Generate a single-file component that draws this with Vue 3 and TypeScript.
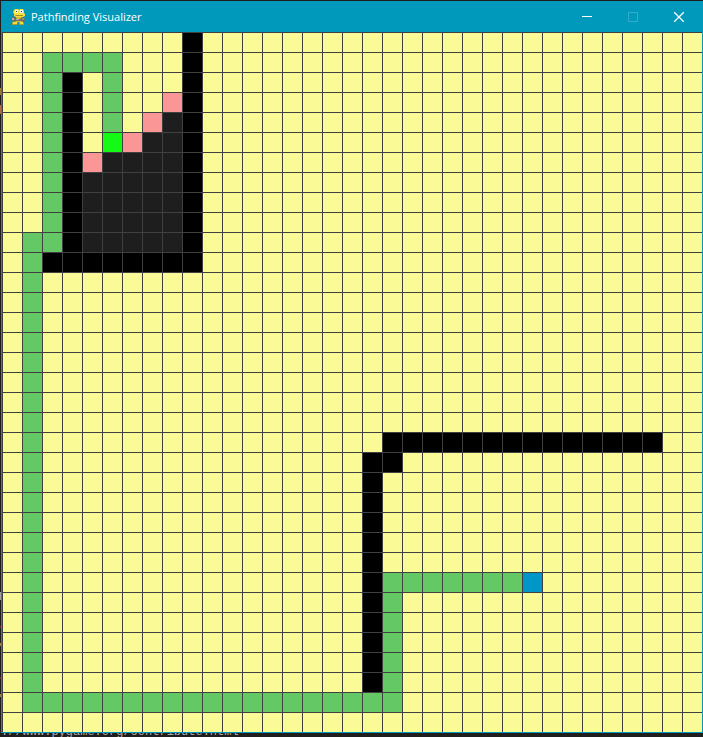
<script setup lang="ts">
type Kind = 'free' | 'wall' | 'path' | 'open' | 'closed' | 'start' | 'end'

interface Block {
  kind: Kind
  rows: [number, number]
  cols: [number, number]
}

const size = 35

// Later blocks are painted over earlier ones; ranges are inclusive.
const blocks: Block[] = [
  { kind: 'closed', rows: [4, 4], cols: [8, 8] },
  { kind: 'closed', rows: [5, 5], cols: [7, 8] },
  { kind: 'closed', rows: [6, 6], cols: [5, 8] },
  { kind: 'closed', rows: [7, 10], cols: [4, 8] },
  { kind: 'open', rows: [3, 3], cols: [8, 8] },
  { kind: 'open', rows: [4, 4], cols: [7, 7] },
  { kind: 'open', rows: [5, 5], cols: [6, 6] },
  { kind: 'open', rows: [6, 6], cols: [4, 4] },
  { kind: 'wall', rows: [0, 11], cols: [9, 9] },
  { kind: 'wall', rows: [2, 10], cols: [3, 3] },
  { kind: 'wall', rows: [11, 11], cols: [2, 9] },
  { kind: 'wall', rows: [20, 20], cols: [19, 32] },
  { kind: 'wall', rows: [21, 21], cols: [18, 19] },
  { kind: 'wall', rows: [21, 32], cols: [18, 18] },
  { kind: 'path', rows: [1, 4], cols: [5, 5] },
  { kind: 'path', rows: [1, 1], cols: [2, 5] },
  { kind: 'path', rows: [1, 10], cols: [2, 2] },
  { kind: 'path', rows: [10, 33], cols: [1, 1] },
  { kind: 'path', rows: [33, 33], cols: [1, 19] },
  { kind: 'path', rows: [27, 33], cols: [19, 19] },
  { kind: 'path', rows: [27, 27], cols: [19, 25] },
  { kind: 'end', rows: [5, 5], cols: [5, 5] },
  { kind: 'start', rows: [27, 27], cols: [26, 26] },
]

const cells: Kind[] = Array.from({ length: size * size }, () => 'free')
for (const { kind, rows, cols } of blocks) {
  for (let r = rows[0]; r <= rows[1]; r++) {
    for (let c = cols[0]; c <= cols[1]; c++) cells[r * size + c] = kind
  }
}
</script>

<template>
  <div class="desktop">
    <main class="window">
      <header class="titlebar">
        <svg class="logo" viewBox="0 0 16 16" aria-hidden="true">
          <path d="M3 12h5v1l-1 3H2v-2zm6 0h4l1 2v2H9z" fill="#b39a2c" />
          <path d="M3 13h4v2H3zm7 0h3v2h-3z" fill="#f4dc3c" />
          <path d="M6 7h6l1 2v4H6z" fill="#d8bc30" />
          <path d="M5 0h3l1 1 1-1h3l1 2v2l1 1v2l-2 1H6L4 7V5L3 3l1-2z" fill="#f8e03c" />
          <path d="M5 1h3v3H5zm5 0h3v3h-3z" fill="#f4f4ec" />
          <path d="M6 2h1v1H6zm5 0h1v1h-1z" fill="#444" />
          <path d="M5 6h8v1H6z" fill="#a08c28" />
          <path d="M1 8h4l2 2h3l2-2h2l1 2v2l-2 1-2-1H6l-2 1-3-2z" fill="#706e6c" />
          <path d="M2 9h2v2H2zm4 1h3v1H6z" fill="#b8b4ae" />
          <path d="M12 9h2v2h-2z" fill="#968c78" />
        </svg>
        <h1 class="title">Pathfinding Visualizer</h1>
        <div class="controls">
          <button class="control" type="button" aria-label="Minimize">
            <svg viewBox="0 0 10 10"><path d="M0 4.500h10" /></svg>
          </button>
          <button class="control" type="button" aria-label="Maximize" disabled>
            <svg viewBox="0 0 10 10"><path d="M.5.5h9v9h-9z" /></svg>
          </button>
          <button class="control" type="button" aria-label="Close">
            <svg class="cross" viewBox="0 0 10 10"><path d="m.2.2 9.600 9.600M9.800.2.2 9.800" /></svg>
          </button>
        </div>
      </header>
      <div class="board">
        <div v-for="(kind, i) in cells" :key="i" class="cell" :class="kind"></div>
      </div>
    </main>
    <footer class="console"><span>://www.pygame.org/contribute.html</span></footer>
  </div>
</template>

<style>
body {
  margin: 0;
  background: #1e1e1e;
}
</style>

<style scoped>
.desktop {
  padding: 1px 0 0 1px;
  background:
    linear-gradient(
      #1e1e1e 88px, #9a7a30 88px 95px, #1e1e1e 95px 105px, #b06c48 105px 114px,
      #1e1e1e 114px 592px, #a0a0a0 592px 600px, #1e1e1e 600px 626px, #7c2424 626px 628px,
      #1e1e1e 628px 643px, #a08040 643px 646px, #1e1e1e 646px 677px, #7c2424 677px 679px,
      #1e1e1e 679px 694px, #a08040 694px 697px, #1e1e1e 697px
    ) left top / 1px 100% no-repeat,
    #1e1e1e;
}

.window {
  border: 1px solid #0099bc;
  border-top: 0;
}

.titlebar {
  display: flex;
  align-items: center;
  height: 31px;
  padding-left: 8px;
  background: #0099bc;
  color: #fff;
}

.logo {
  width: 16px;
  height: 16px;
}

.title {
  margin: 0 0 0 5px;
  font: 400 11px/16px "Open Sans", "Noto Sans", sans-serif;
  white-space: nowrap;
}

.controls {
  display: flex;
  margin-left: auto;
}

.control {
  display: flex;
  align-items: center;
  justify-content: center;
  width: 46px;
  height: 31px;
  padding: 0;
  border: 0;
  background: none;
  color: #fff;
}

.control:disabled {
  color: #33adc9;
}

.control svg {
  width: 10px;
  height: 10px;
  overflow: visible;
  fill: none;
  stroke: currentColor;
}

.control .cross {
  stroke-width: 1.3;
}

.board {
  display: grid;
  grid-template-columns: repeat(35, 1fr);
}

.cell {
  box-sizing: border-box;
  aspect-ratio: 1;
  border: solid #404040;
  border-width: 1px 0 0 1px;
}

.free {
  background: #fafa96;
}

.wall {
  background: #000;
}

.path {
  background: #64c864;
}

.open {
  background: #fa9696;
}

.closed {
  background: #1e1e1e;
}

.end {
  background: #14fa14;
}

.start {
  background: #0096c8;
}

.console {
  display: flex;
  align-items: flex-end;
  height: 4px;
  overflow: hidden;
  color: #aaa;
  font: 12px/10px "Liberation Mono", monospace;
}
</style>
